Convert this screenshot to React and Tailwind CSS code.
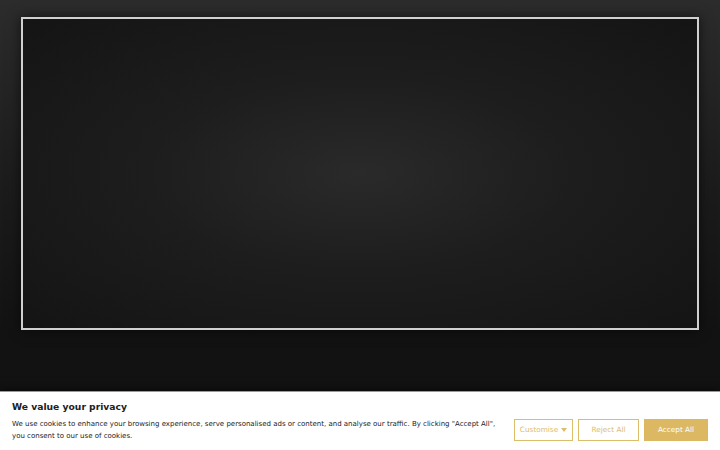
export default function App() {
  return (
    <div
      className="relative w-[720px] h-[450px] overflow-hidden bg-[linear-gradient(180deg,#2c2c2c_0%,#1c1c1c_40%,#121212_75%,#111111_100%)]"
      style={{ fontFamily: '"DejaVu Sans", sans-serif' }}
    >
      {/* video frame */}
      <div className="pt-[17px] pl-[21px]">
        <div className="w-[678px] h-[313px] border-2 border-[#d0d0d0] bg-[radial-gradient(ellipse_at_center,#2a2a2a_0%,#1d1d1d_45%,#141414_100%)] shadow-[0_0_12px_rgba(0,0,0,0.6)]" />
      </div>

      {/* cookie consent banner */}
      <div className="absolute left-0 right-0 bottom-0 h-[59px] bg-white border-t border-[#9a9a9a] shadow-[0_-2px_6px_rgba(0,0,0,0.4)] flex items-center pl-[12px] pr-[12px]">
        <div className="min-w-0 flex-1">
          <div className="text-[9.2px] font-bold text-[#212121] leading-[14px]">We value your privacy</div>
          <p className="mt-[4px] text-[7px] leading-[12px] text-[#212121] whitespace-nowrap">
            We use cookies to enhance your browsing experience, serve personalised ads or content, and analyse our traffic. By clicking "Accept All",
            <br />
            you consent to our use of cookies.
          </p>
        </div>
        <div className="flex flex-none items-center gap-[5px] mt-[18px]">
          <button className="w-[59px] h-[22px] border border-[#dcbd6a] text-[#dcbd6a] text-[7.3px] flex items-center justify-center gap-[3px]">
            Customise
            <svg width="6" height="4" viewBox="0 0 6 4"><path d="M0 0h6L3 4z" fill="#dcbd6a" /></svg>
          </button>
          <button className="w-[61px] h-[22px] border border-[#dcbd6a] text-[#dcbd6a] text-[7.3px]">Reject All</button>
          <button className="w-[64px] h-[22px] border border-[#dcb863] bg-[#dcb863] text-white text-[7.3px]">Accept All</button>
        </div>
      </div>
    </div>
  );
}
